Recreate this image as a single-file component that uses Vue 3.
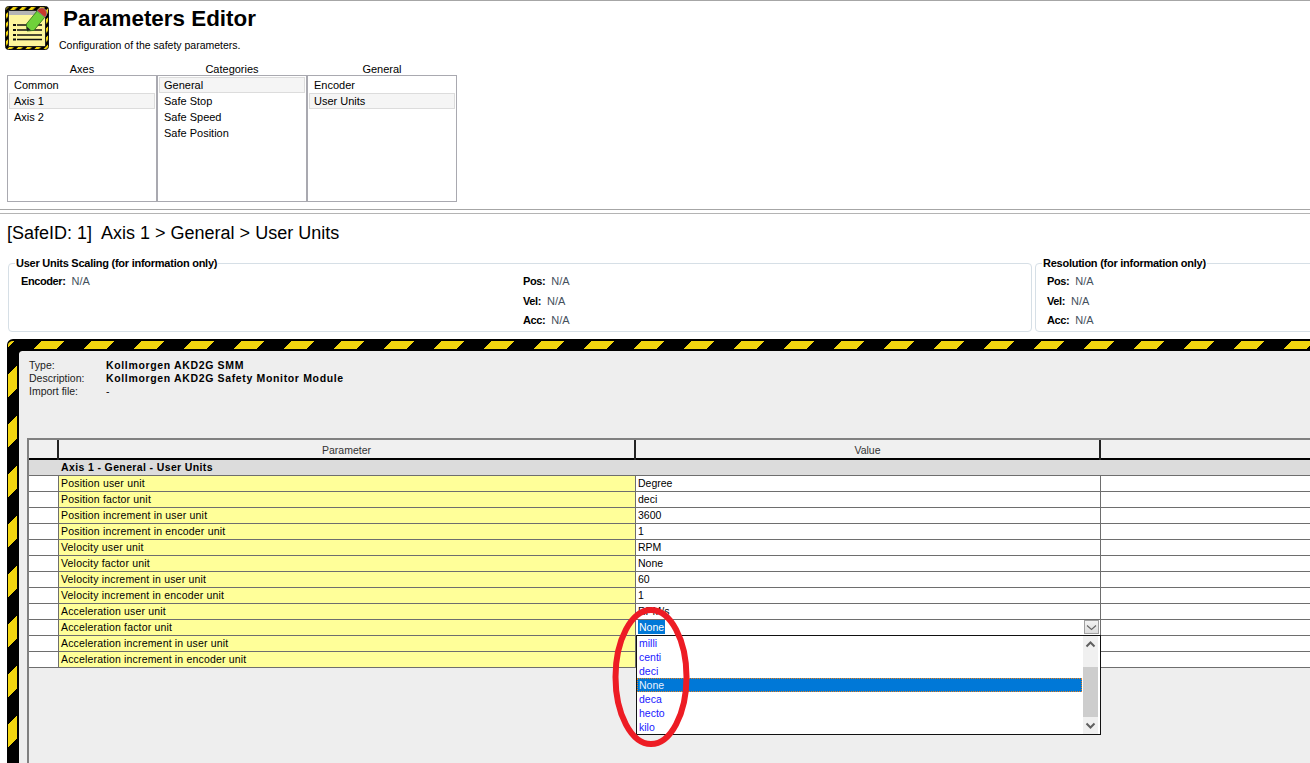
<template>
  <div class="page">
    <header class="header">
      <svg class="logo" width="44" height="44" viewBox="0 0 44 44">
        <defs>
          <pattern id="hz" width="6.4" height="6.4" patternUnits="userSpaceOnUse" patternTransform="rotate(45)">
            <rect width="6.4" height="6.4" fill="#000" />
            <rect width="3.2" height="6.4" fill="#f3d610" />
          </pattern>
        </defs>
        <rect x="0.5" y="0.5" width="43" height="43" rx="3" fill="url(#hz)" stroke="#111" />
        <rect x="3.5" y="4.5" width="37" height="36" fill="#fdf59c" stroke="#222" />
        <rect x="4" y="5" width="36" height="4" fill="#b5b5b5" />
        <path d="M8 19h3M8 24h3M8 29h3M8 33.5h3" stroke="#111" stroke-width="2" />
        <path d="M12 19h25M12 24h25M12 29h25M12 33.5h25" stroke="#111" stroke-width="1.6" />
        <path d="M22 25 L21.4 18 L32.2 4.8 L39.8 11.2 L29 24.4 Z" fill="#6fd13a" stroke="#2d6b14" stroke-width="0.8" />
        <path d="M22 25 L21.6 20.5 L26 24.2 Z" fill="#222" />
        <path d="M32.2 4.8 L34 2.8 Q37 0.6 40 3 Q42.6 6 41.4 9.2 L39.8 11.2 Z" fill="#c9372c" stroke="#8d8d8d" stroke-width="0.8" />
      </svg>
      <div class="titles">
        <h1 class="title">Parameters Editor</h1>
        <p class="subtitle">Configuration of the safety parameters.</p>
      </div>
    </header>

    <section class="lists">
      <div v-for="list in lists" :key="list.title" class="list-col">
        <div class="list-title">{{ list.title }}</div>
        <ul class="listbox">
          <li v-for="item in list.items" :key="item" class="list-item" :class="{ selected: item === list.selected }">{{ item }}</li>
        </ul>
      </div>
    </section>

    <div class="splitter"></div>

    <h2 class="crumb">[SafeID: 1]&nbsp; Axis 1 &gt; General &gt; User Units</h2>

    <section class="groups">
      <fieldset class="group group-wide">
        <legend>User Units Scaling (for information only)</legend>
        <div class="encoder"><b>Encoder:</b><span>N/A</span></div>
        <div class="scaling">
          <div v-for="v in scaling" :key="v" class="kv"><b>{{ v }}:</b><span>N/A</span></div>
        </div>
      </fieldset>
      <fieldset class="group group-res">
        <legend>Resolution (for information only)</legend>
        <div class="scaling">
          <div v-for="v in scaling" :key="v" class="kv"><b>{{ v }}:</b><span>N/A</span></div>
        </div>
      </fieldset>
    </section>

    <section class="hazard">
      <div class="inner">
        <div class="info">
          <div class="info-row"><span>Type:</span><b>Kollmorgen AKD2G SMM</b></div>
          <div class="info-row"><span>Description:</span><b>Kollmorgen AKD2G Safety Monitor Module</b></div>
          <div class="info-row"><span>Import file:</span><b class="plain">-</b></div>
        </div>

        <div class="grid">
          <div class="row head">
            <div class="c-h"></div>
            <div class="c-p">Parameter</div>
            <div class="c-v">Value</div>
            <div class="c-x"></div>
          </div>
          <div class="row group-row">
            <div class="c-h"></div>
            <div class="c-title">Axis 1 - General - User Units</div>
          </div>
          <div v-for="row in rows" :key="row.name" class="row data">
            <div class="c-h"></div>
            <div class="c-p">{{ row.name }}</div>
            <div class="c-v">
              <template v-if="row.editing">
                <span class="sel-text">{{ row.value }}</span>
                <span class="combo-btn">
                  <svg width="11" height="7" viewBox="0 0 11 7"><path d="M1 1.5 L5.5 5.5 L10 1.5" fill="none" stroke="#666" stroke-width="1.1" /></svg>
                </span>
                <div class="dropdown">
                  <ul class="options">
                    <li v-for="o in factors" :key="o" class="option" :class="{ current: o === 'None' }">{{ o }}</li>
                  </ul>
                  <div class="scroll">
                    <svg width="15" height="17" viewBox="0 0 15 17"><path d="M3.5 10.5 L7.5 6.5 L11.5 10.5" fill="none" stroke="#606060" stroke-width="2" /></svg>
                    <div class="thumb"></div>
                    <svg width="15" height="17" viewBox="0 0 15 17"><path d="M3.5 6.5 L7.5 10.5 L11.5 6.5" fill="none" stroke="#606060" stroke-width="2" /></svg>
                  </div>
                </div>
              </template>
              <template v-else>{{ row.value }}</template>
            </div>
            <div class="c-x"></div>
          </div>
        </div>
      </div>
    </section>

    <svg class="annotation" width="84" height="146" viewBox="0 0 84 146">
      <ellipse cx="42" cy="73" rx="35.5" ry="67" fill="none" stroke="#ed1c24" stroke-width="6" />
    </svg>
  </div>
</template>

<script setup>
const lists = [
  { title: 'Axes', items: ['Common', 'Axis 1', 'Axis 2'], selected: 'Axis 1' },
  { title: 'Categories', items: ['General', 'Safe Stop', 'Safe Speed', 'Safe Position'], selected: 'General' },
  { title: 'General', items: ['Encoder', 'User Units'], selected: 'User Units' }
]

const scaling = ['Pos', 'Vel', 'Acc']

const rows = [
  { name: 'Position user unit', value: 'Degree' },
  { name: 'Position factor unit', value: 'deci' },
  { name: 'Position increment in user unit', value: '3600' },
  { name: 'Position increment in encoder unit', value: '1' },
  { name: 'Velocity user unit', value: 'RPM' },
  { name: 'Velocity factor unit', value: 'None' },
  { name: 'Velocity increment in user unit', value: '60' },
  { name: 'Velocity increment in encoder unit', value: '1' },
  { name: 'Acceleration user unit', value: 'RPM/s' },
  { name: 'Acceleration factor unit', value: 'None', editing: true },
  { name: 'Acceleration increment in user unit', value: '' },
  { name: 'Acceleration increment in encoder unit', value: '' }
]

const factors = ['milli', 'centi', 'deci', 'None', 'deca', 'hecto', 'kilo']
</script>

<style>
html, body {
  margin: 0;
  background: #fff;
}
</style>

<style scoped>
.page {
  position: relative;
  width: 1310px;
  height: 763px;
  overflow: hidden;
  background: #fff;
  color: #000;
  font-family: "Liberation Sans", Arial, sans-serif;
  font-size: 11px;
  border-top: 1px solid #a6a6a6;
  box-sizing: border-box;
}

.header {
  display: flex;
  height: 61px;
  padding: 5px 0 0 5px;
  box-sizing: border-box;
}

.titles {
  margin-left: 14px;
}

.title {
  margin: 0;
  font-size: 22.4px;
  line-height: 26px;
  font-weight: bold;
}

.subtitle {
  margin: 6px 0 0 -4px;
  font-size: 10.5px;
  line-height: 15px;
}

.lists {
  display: flex;
  padding-left: 7px;
}

.list-col {
  width: 150px;
}

.list-title {
  height: 13px;
  line-height: 15px;
  text-align: center;
  font-size: 11px;
}

.listbox {
  list-style: none;
  margin: 0;
  padding: 1px;
  width: 150px;
  height: 127px;
  box-sizing: border-box;
  border: 1px solid #a9a9b0;
}

.list-item {
  height: 16px;
  line-height: 16px;
  padding-left: 5px;
  font-size: 11px;
  box-sizing: border-box;
}

.list-item.selected {
  background: #f5f5f5;
  box-shadow: inset 0 0 0 1px #dcdcdc;
}

.splitter {
  height: 3px;
  margin-top: 7px;
  border-top: 1px solid #a6a6a6;
  border-bottom: 1px solid #b4b4b4;
  box-sizing: content-box;
}

.crumb {
  margin: 9px 0 0 7px;
  height: 20px;
  line-height: 20px;
  font-size: 18px;
  font-weight: normal;
}

.groups {
  display: flex;
  gap: 3px;
  margin: 14px 0 0 8px;
  width: 1400px;
}

.group {
  margin: 0;
  padding: 0 0 0 12px;
  height: 75px;
  box-sizing: border-box;
  border: 1px solid #d6dfe6;
  border-radius: 4px;
}

.group legend {
  padding: 0 1px;
  margin-left: -6px;
  font-weight: bold;
  font-size: 11px;
  line-height: 13px;
  letter-spacing: -0.25px;
}

.group-wide {
  display: block;
  width: 1024px;
}

.group-res {
  width: 360px;
}

.kv, .encoder {
  display: flex;
  gap: 6px;
  height: 19.5px;
  line-height: 14px;
  font-size: 11px;
}

.kv b, .encoder b {
  letter-spacing: -0.4px;
}

.kv span, .encoder span {
  color: #44505c;
}

.scaling {
  padding-top: 4px;
}

.group-wide .scaling {
  margin-left: 502px;
}

.group-res .scaling {
  margin-left: -1px;
}

.group-wide .encoder {
  position: absolute;
  margin-top: 4px;
}

.hazard {
  margin: 7px 0 0 7px;
  width: 1340px;
  height: 440px;
  padding: 10px 0 0 11px;
  box-sizing: border-box;
  border: 1px solid #000;
  border-top-width: 2px;
  border-radius: 6px 0 0 0;
  background: repeating-linear-gradient(135deg, #f3d60f 0, #f3d60f 4.6px, #000 4.6px, #000 23.65px, #f3d60f 23.65px, #f3d60f 35.36px);
}

.inner {
  height: 100%;
  padding: 8px 0 0 10px;
  box-sizing: border-box;
  background: #eee;
  outline: 2px solid #000;
  border-radius: 3px 0 0 0;
}

.info {
  height: 79px;
}

.info-row {
  display: flex;
  height: 13px;
  line-height: 13px;
  font-size: 10.5px;
  color: #222;
}

.info-row span {
  width: 77px;
}

.info-row b {
  color: #000;
  letter-spacing: 0.65px;
}

.info-row b.plain {
  font-weight: normal;
}

.grid {
  margin-left: -2px;
  height: 330px;
  border-top: 2px solid #808080;
  border-left: 2px solid #808080;
}

.row {
  display: grid;
  grid-template-columns: 30px 577px 465px 1fr;
  height: 16px;
  line-height: 15px;
  font-size: 10.5px;
  box-sizing: border-box;
  border-bottom: 1px solid #6e6e6e;
}

.row.head {
  height: 20px;
  line-height: 20px;
  border-bottom: 2px solid #000;
  color: #333;
  text-align: center;
  background: #f0f0f0;
}

.row.head .c-h,
.row.head .c-p,
.row.head .c-v {
  border-right: 2px solid #222;
}

.group-row {
  background: #dcdcdc;
  font-weight: bold;
  grid-template-columns: 32px 1fr;
  letter-spacing: 0.37px;
}

.row.data .c-h {
  background: #fff;
  border-right: 1px solid #6e6e6e;
}

.row.data .c-p {
  background: #ffff99;
  padding-left: 2px;
  letter-spacing: 0.18px;
  border-right: 1px solid #6e6e6e;
}

.row.data .c-v {
  position: relative;
  padding-left: 2px;
  border-right: 1px solid #6e6e6e;
  background: #fff;
}

.row.data .c-x {
  background: #fff;
}

.sel-text {
  display: inline-block;
  height: 14px;
  line-height: 14px;
  padding: 0 1px;
  background: #0078d7;
  color: #fff;
}

.combo-btn {
  position: absolute;
  top: 0;
  right: 1px;
  width: 15px;
  height: 14px;
  box-sizing: border-box;
  display: flex;
  align-items: center;
  justify-content: center;
  background: linear-gradient(#f2f2f2, #dcdcdc);
  border: 1px solid #a0a0a0;
}

.dropdown {
  position: absolute;
  z-index: 2;
  top: 15px;
  left: 0;
  right: -1px;
  height: 100px;
  display: flex;
  box-sizing: border-box;
  border: 1px solid #111;
  background: #fff;
}

.options {
  flex: 1;
  list-style: none;
  margin: 0;
  padding: 0 1px 0 0;
}

.option {
  height: 14px;
  line-height: 14px;
  padding-left: 2px;
  color: #1a1aff;
  box-sizing: border-box;
}

.option.current {
  background: #0078d7;
  color: #e8f2ff;
  outline: 1px dotted #e8801c;
  outline-offset: -1px;
}

.scroll {
  width: 15px;
  margin-right: 2px;
  background: #f0f0f0;
  display: flex;
  flex-direction: column;
}

.thumb {
  height: 50px;
  margin-top: 14px;
  background: #cdcdcd;
}

.annotation {
  position: absolute;
  left: 609px;
  top: 603px;
  z-index: 3;
}
</style>
